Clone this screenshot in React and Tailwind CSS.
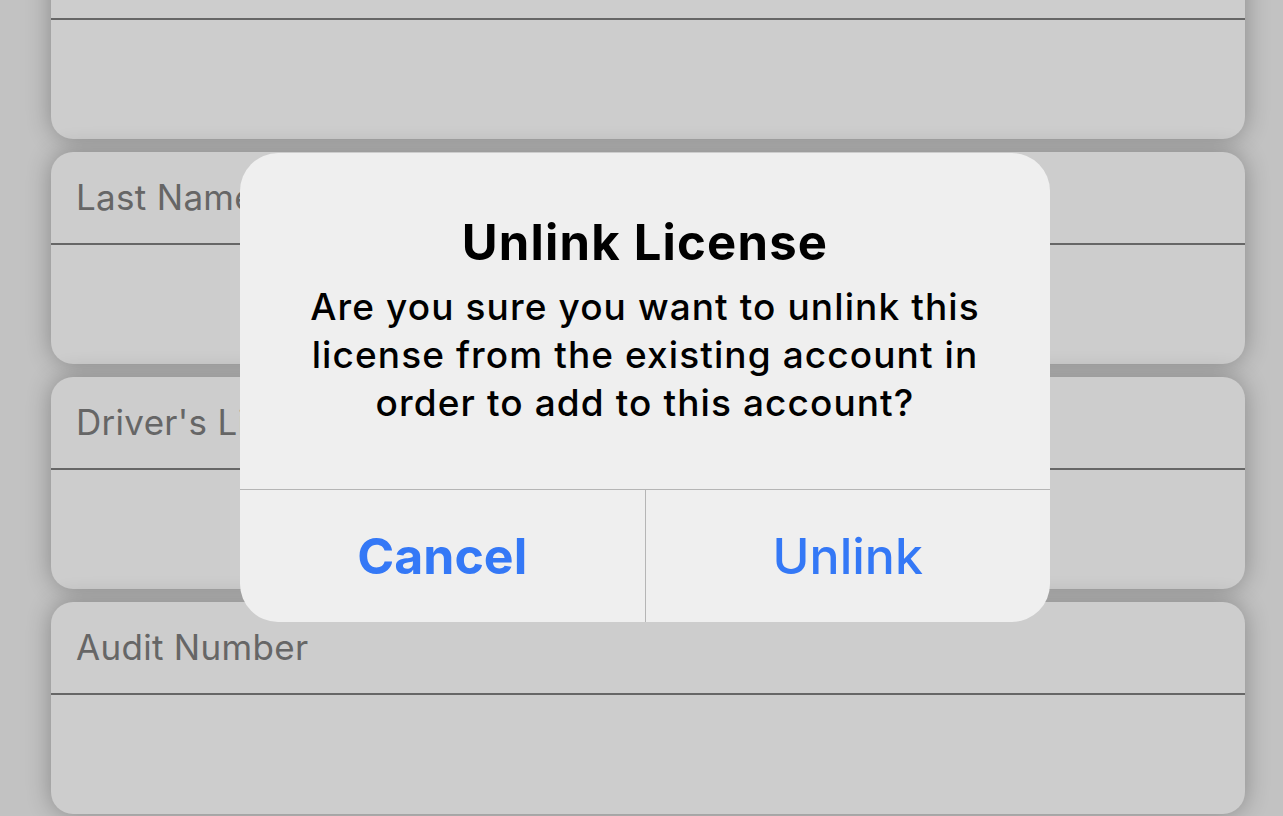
import React from 'react';

const fields = ['', 'Last Name', "Driver's License", 'Audit Number'];

function FieldCard({ label }) {
  return (
    <div className="h-[212px] shrink-0 rounded-[22px] bg-[#cdcdcd] shadow-[0_0_24px_rgba(0,0,0,0.3)] flex flex-col overflow-hidden">
      <div className="h-[93px] shrink-0 flex items-center pl-[25px] border-b-2 border-[#666666] text-[35px] tracking-[0.3px] text-[#666666]">
        {label}
      </div>
      <div className="flex-1" />
    </div>
  );
}

export default function App() {
  return (
    <div
      className="relative h-[816px] w-[1283px] overflow-hidden bg-[#c2c2c2]"
      style={{ fontFamily: 'Inter, "Noto Sans", sans-serif' }}
    >
      <div className="-mt-[73px] pl-[51px] pr-[38px] flex flex-col gap-[13px]">
        {fields.map((f, i) => (
          <FieldCard key={i} label={f} />
        ))}
      </div>

      {/* alert */}
      <div className="absolute left-[240px] top-[153px] w-[810px] h-[469px] rounded-[38px] bg-[#efefef] flex flex-col overflow-hidden">
        <div className="flex-1 flex flex-col items-center pt-[62px] px-[20px] text-center text-black">
          <div className="text-[49px] leading-[56px] font-bold tracking-[1.2px]">Unlink License</div>
          <div className="mt-[12px] text-[37px] leading-[48px] font-medium tracking-[1.1px]">
            Are you sure you want to unlink this
            <br />
            license from the existing account in
            <br />
            order to add to this account?
          </div>
        </div>
        <div className="h-[133px] shrink-0 flex border-t border-[#b5b5b5]">
          <div className="flex-1 flex items-center justify-center text-[50px] font-bold text-[#3478f6]">
            Cancel
          </div>
          <div className="w-px bg-[#b5b5b5]" />
          <div className="flex-1 flex items-center justify-center text-[50px] font-medium text-[#3478f6]">
            Unlink
          </div>
        </div>
      </div>
    </div>
  );
}
